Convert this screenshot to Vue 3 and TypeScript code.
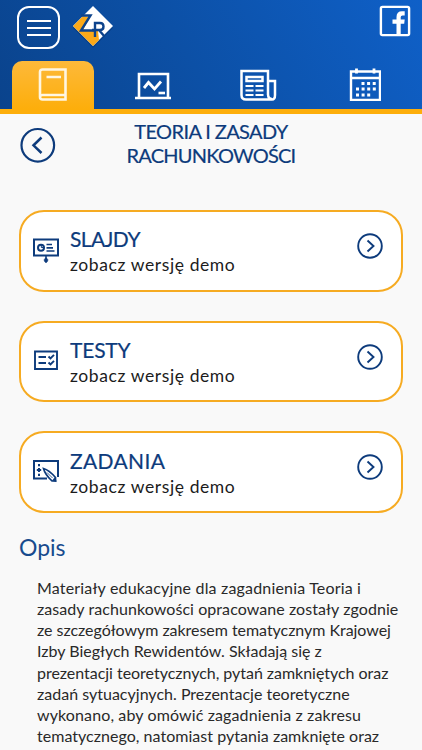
<script setup lang="ts">
interface Card {
  kind: 'slides' | 'tests' | 'tasks'
  title: string
  spacing: string
}

interface Line {
  text: string
  spacing: string
}

const cards: Card[] = [
  { kind: 'slides', title: 'SLAJDY', spacing: '-0.6px' },
  { kind: 'tests', title: 'TESTY', spacing: '-0.2px' },
  { kind: 'tasks', title: 'ZADANIA', spacing: '0.35px' },
]

const lines: Line[] = [
  { text: 'Materiały edukacyjne dla zagadnienia Teoria i', spacing: '0.18px' },
  { text: 'zasady rachunkowości opracowane zostały zgodnie', spacing: '0.07px' },
  { text: 'ze szczegółowym zakresem tematycznym Krajowej', spacing: '-0.04px' },
  { text: 'Izby Biegłych Rewidentów. Składają się z', spacing: '0px' },
  { text: 'prezentacji teoretycznych, pytań zamkniętych oraz', spacing: '-0.03px' },
  { text: 'zadań sytuacyjnych. Prezentacje teoretyczne', spacing: '0.01px' },
  { text: 'wykonano, aby omówić zagadnienia z zakresu', spacing: '0.12px' },
  { text: 'tematycznego, natomiast pytania zamknięte oraz', spacing: '0.03px' },
]
</script>

<template>
  <div class="screen">
    <header class="header">
      <div class="topbar">
        <button class="menu" aria-label="Menu"><i /><i /><i /></button>
        <svg class="logo" width="42" height="42" viewBox="0 0 42 42">
          <path d="M21 2 41 22 21 42 1 22Z" fill="#073a7d" opacity=".6" />
          <path d="M21 0 41 20 21 40 1 20Z" fill="#fff" />
          <path d="M11 10 1 20 21 40 27 34 26 25 11 24 18 11Z" fill="#fba919" />
          <g fill="none" stroke="#0d438c" stroke-width="2.4">
            <path d="M9 9.500H18.500L9 24.500H22" />
            <path d="M23 31V17H28Q31.500 17 31.500 20.500T28 24H20M27 24 32.500 30.500" />
          </g>
        </svg>
        <svg class="facebook" width="32" height="32" viewBox="0 0 32 32">
          <rect x="1.900" y="1.900" width="28.200" height="28.200" rx="1.500" fill="none" stroke="#fff" stroke-width="2.400" />
          <path d="M17.500 30V18.800H13.500V14.500H17.500V12Q17.500 6.300 23 6.300H25.700V10.400H23.500Q21.700 10.400 21.700 12.200V14.500H25.700L25.200 18.800H21.700V30Z" fill="#fff" />
        </svg>
      </div>
      <nav class="tabs">
        <a class="tab active">
          <svg width="30" height="34" viewBox="0 0 30 34" fill="none" stroke="#fff6e2" stroke-width="2.600">
            <path d="M27.500 2.500H4.500Q2 2.500 2 5V30Q2 32.500 4.500 32.500H27.500ZM2 30Q2 28 4.500 28H28M8.500 10H23" />
          </svg>
        </a>
        <a class="tab">
          <svg width="38" height="34" viewBox="0 0 38 34" fill="none" stroke="#fff" stroke-width="2.600">
            <path d="M5 30V7H34V30" />
            <path d="M1 31H37" />
            <path d="M10 21 14.500 15.500 20.500 22 27 14.500" stroke-width="2.800" />
            <path d="M24.500 26H31" />
          </svg>
        </a>
        <a class="tab">
          <svg width="38" height="34" viewBox="0 0 38 34" fill="none" stroke="#fff" stroke-width="2.500">
            <path d="M29 28V4H2.500V28Q2.500 32.500 7 32.500H33Q36 32.500 36 28V14H29M29 27Q29 32 33 32" />
            <path d="M7.500 10H23.500V14H7.500Z" />
            <path d="M6.500 19H14.500M16.500 19H24.500M6.500 23.500H14.500M16.500 23.500H24.500M6.500 28H14.500M16.500 28H24.500" stroke-width="2.200" />
          </svg>
        </a>
        <a class="tab">
          <svg width="32" height="34" viewBox="0 0 32 34" fill="none" stroke="#fff">
            <path d="M2 4.500H31V33H2ZM2 11H31" stroke-width="2.400" />
            <path d="M7.500 1.500V6.500M25 1.500V6.500" stroke-width="2.800" />
            <path d="M12.500 16.500H27M7 22H27M7 28H21.500" stroke-width="3" stroke-dasharray="3 2.600" />
          </svg>
        </a>
      </nav>
    </header>

    <section class="heading">
      <svg class="back" width="36" height="36" viewBox="0 0 36 36" fill="none" stroke="#0d3b7c" stroke-width="2.200">
        <circle cx="17.800" cy="18.300" r="16.300" />
        <path d="M21.500 10.500 13.500 18.300 21.500 26" stroke-width="2.500" />
      </svg>
      <h1><span class="first">TEORIA I ZASADY</span><span class="second">RACHUNKOWOŚCI</span></h1>
    </section>

    <main class="cards">
      <article v-for="card in cards" :key="card.kind" class="card">
        <svg v-if="card.kind === 'slides'" class="icon" width="28" height="28" viewBox="0 0 28 28" fill="none" stroke="#0d3b7c" stroke-width="2">
          <path d="M2 2.500H26V18.500H2Z" />
          <path d="M14 19V24" stroke-width="1.500" />
          <path d="M12.200 22.500 14 20.500 15.800 22.500V24L14 26 12.200 24Z" fill="#0d3b7c" stroke-width=".5" />
          <circle cx="9" cy="10.800" r="3" />
          <path d="M9.300 10.500V7.500M9.300 10.500H12.500" stroke-width="1" />
          <path d="M14.500 7.500H20M14.500 10.800H21M14.500 14H22.500" stroke-width="1.700" />
        </svg>
        <svg v-else-if="card.kind === 'tests'" class="icon" width="28" height="28" viewBox="0 0 28 28" fill="none" stroke="#0d3b7c" stroke-width="1.900">
          <path d="M3 3.500H25V21H3Z" />
          <path d="M6.500 9H14M6.500 15H14" />
          <path d="M16.500 8.500 18.500 10.500 22 6.800M16.500 14.500 18.500 16.500 22 12.800" />
        </svg>
        <svg v-else class="icon" width="28" height="28" viewBox="0 0 28 28" fill="none" stroke="#0d3b7c" stroke-width="2">
          <path d="M15 20.500H2V3H26V19" />
          <path d="M7 6V8.200M7 15.800V18M4.800 12H9.200M7 10V14" />
          <path d="M11.500 10.500Q17 12 23.500 19.500L23.500 23H20Q13 16.500 11.500 10.500Z" stroke-width="1.700" fill="#fff" />
          <path d="M15 14.500 20.500 20" stroke-width=".8" />
          <path d="M20.500 22.500 23 19.500 24.200 23.500Z" fill="#0d3b7c" stroke-width=".8" />
        </svg>
        <div class="copy">
          <h2 :style="{ letterSpacing: card.spacing }">{{ card.title }}</h2>
          <p>zobacz wersję demo</p>
        </div>
        <svg class="go" width="26" height="26" viewBox="0 0 26 26" fill="none" stroke="#0d3b7c" stroke-width="1.900">
          <circle cx="13" cy="13" r="11.800" />
          <path d="M10.500 7.500 16.500 13 10.500 18.500" />
        </svg>
      </article>
    </main>

    <section class="description">
      <h3>Opis</h3>
      <p><span v-for="line in lines" :key="line.text" :style="{ letterSpacing: line.spacing }">{{ line.text }}</span></p>
    </section>
  </div>
</template>

<style>
body {
  background: #f9f9f9;
  overflow: hidden;
}
</style>

<style scoped>
.screen {
  width: 422px;
  height: 750px;
  overflow: hidden;
  background: #f9f9f9;
  font-family: Lato, 'Open Sans', sans-serif;
}
.header {
  box-sizing: border-box;
  height: 114px;
  border-bottom: 5px solid #fdae0b;
  background: linear-gradient(60deg, #0a438c 0%, #0c50a6 45%, #0f60c8 100%);
}
.topbar {
  display: flex;
  height: 61px;
  padding: 5px 11px 0 17px;
  box-sizing: border-box;
}
.menu {
  display: flex;
  flex-direction: column;
  justify-content: center;
  align-items: center;
  gap: 5px;
  box-sizing: border-box;
  width: 43px;
  height: 43px;
  margin-top: 1px;
  padding: 0;
  border: 2px solid #fff;
  border-radius: 12px;
  background: none;
}
.menu i {
  width: 24px;
  height: 2px;
  background: #fff;
}
.logo {
  margin: 1px 0 0 12px;
}
.facebook {
  margin-left: auto;
  margin-top: 0;
}
.tabs {
  display: grid;
  grid-template-columns: 82px 117px 94px 120px;
  height: 48px;
  padding-left: 12px;
}
.tab {
  display: flex;
  justify-content: center;
  padding-top: 6px;
}
.active {
  border-radius: 10px 10px 0 0;
  background: linear-gradient(#fdb93a, #fdae0b);
}
.heading {
  display: grid;
  grid-template-columns: 36px 1fr 36px;
  box-sizing: border-box;
  height: 96px;
  padding: 6px 20px 0;
}
.back {
  margin-top: 7px;
}
h1 {
  display: flex;
  flex-direction: column;
  align-items: center;
  margin: 0;
  color: #0d3b7c;
  font-size: 20px;
  line-height: 23.500px;
  font-weight: 400;
  -webkit-text-stroke: 0.200px;
}
.first {
  letter-spacing: -0.600px;
}
.second {
  letter-spacing: -0.770px;
}
.cards {
  display: flex;
  flex-direction: column;
  gap: 29px;
  padding: 0 19px;
}
.card {
  display: flex;
  box-sizing: border-box;
  height: 81.500px;
  padding: 0 18px 0 11px;
  border: 2.500px solid #f6ab22;
  border-radius: 25px;
  background: #fff;
}
.icon {
  margin-top: 25px;
}
.copy {
  flex: 1;
  margin-left: 10px;
}
h2 {
  margin: 13.500px 0 0;
  color: #0d3b7c;
  font-size: 21px;
  line-height: 26px;
  font-weight: 400;
  -webkit-text-stroke: 0.200px;
}
.copy p {
  margin: 1px 0 0;
  color: #1c1c1c;
  font-size: 17.500px;
  line-height: 24px;
  letter-spacing: 0.600px;
  white-space: nowrap;
}
.card:nth-child(n + 2) .copy {
  padding-top: 1px;
}
.go {
  margin-top: 21px;
}
.description {
  padding: 20px 19px 0;
}
h3 {
  margin: 0;
  color: #184b8d;
  font-size: 23px;
  line-height: 28px;
  font-weight: 400;
}
.description p {
  margin: 16.500px 0 0 18px;
  color: #292929;
  font-size: 16px;
  line-height: 21.150px;
}
.description span {
  display: block;
  white-space: nowrap;
}
</style>
